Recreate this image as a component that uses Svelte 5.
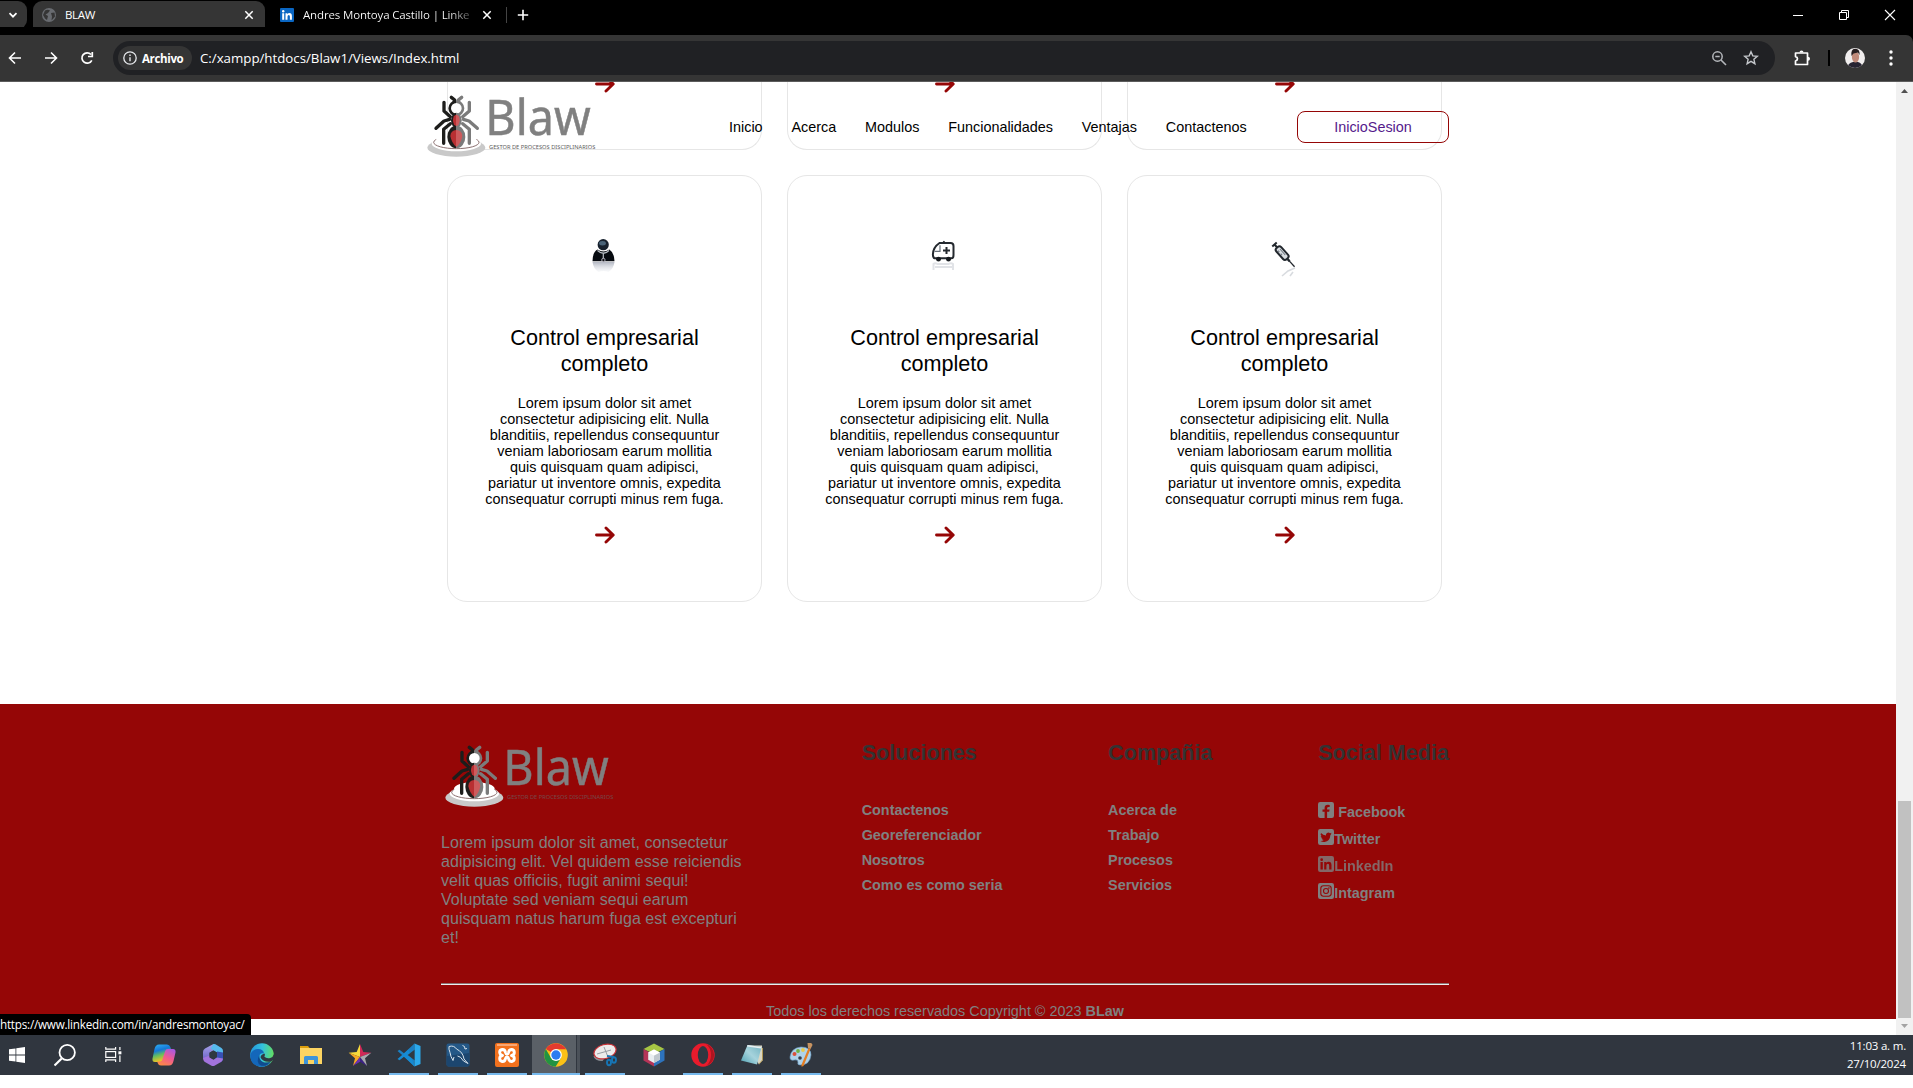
<script>
  const cards = [
    { icon: 'lawyer' },
    { icon: 'ambulance' },
    { icon: 'syringe' }
  ];
  const body = [
    'Lorem ipsum dolor sit amet',
    'consectetur adipisicing elit. Nulla',
    'blanditiis, repellendus consequuntur',
    'veniam laboriosam earum mollitia',
    'quis quisquam quam adipisci,',
    'pariatur ut inventore omnis, expedita',
    'consequatur corrupti minus rem fuga.'
  ];
  const about = [
    'Lorem ipsum dolor sit amet, consectetur',
    'adipisicing elit. Vel quidem esse reiciendis',
    'velit quas officiis, fugit animi sequi!',
    'Voluptate sed veniam sequi earum',
    'quisquam natus harum fuga est excepturi',
    'et!'
  ];
  const nav = ['Inicio', 'Acerca', 'Modulos', 'Funcionalidades', 'Ventajas', 'Contactenos'];
  const solutions = ['Contactenos', 'Georeferenciador', 'Nosotros', 'Como es como seria'];
  const company = ['Acerca de', 'Trabajo', 'Procesos', 'Servicios'];
  const social = [
    { name: 'Facebook', icon: 'facebook' },
    { name: 'Twitter', icon: 'twitter' },
    { name: 'LinkedIn', icon: 'linkedin' },
    { name: 'Intagram', icon: 'instagram' }
  ];
  const apps = [
    { id: 'search' }, { id: 'taskview' }, { id: 'copilot' }, { id: 'm365' }, { id: 'edge' },
    { id: 'explorer' }, { id: 'star' }, { id: 'vscode', open: true }, { id: 'workbench', open: true },
    { id: 'xampp', open: true }, { id: 'chrome', open: true, active: true }, { id: 'snip', open: true },
    { id: 'netbeans' }, { id: 'opera', open: true }, { id: 'notepad', open: true }, { id: 'paint', open: true }
  ];
</script>

{#snippet arrow()}
  <svg class="arrow" viewBox="0 0 20 18" width="20" height="18">
    <path d="M1.5 9H18M11 2l7.200 7-7.200 7" fill="none" stroke="#950606" stroke-width="2.900" stroke-linecap="round" stroke-linejoin="round" />
  </svg>
{/snippet}

{#snippet logo(dark)}
  <svg class="logo" viewBox="50 70 510 201" width="170" height="67">
    <ellipse cx="138" cy="234" rx="87" ry="27" fill="#c9c9c9" />
    <ellipse cx="138" cy="222" rx="74" ry="23" fill="#fff" />
    <ellipse cx="138" cy="218" rx="68" ry="19" fill="none" stroke="#8a6f6f" stroke-width="3" />
    <ellipse cx="138" cy="207" rx="61" ry="20" fill="#fff" />
    <g fill="none" stroke-width="10" stroke-linecap="round" stroke-linejoin="round">
      <path stroke="#1d1d1b" d="M123 83l10 8-2 10M101 98v26l19 17M118 149l-17 5-24 22M120 162l-20 17v42" />
      <path stroke="#7b7b7b" d="M154 83l-10 8 2 10M177 98v26l-20 17M159 149l17 5 25 22M157 162l20 17v42" />
    </g>
    <circle cx="138" cy="116" r="20" fill="#fff" stroke="url(#half)" stroke-width="8" />
    <ellipse cx="138" cy="152" rx="16" ry="23" fill="url(#half)" />
    <ellipse cx="138" cy="202" rx="27" ry="34" fill="url(#half)" />
    <ellipse cx="138" cy="152" rx="10" ry="17" fill="url(#halfRed)" />
    <path d="M138 181q-17 1-18 18 4 21 18 33 15-12 18-33-1-17-18-18z" fill="url(#halfRed)" />
    <text x="225" y="195" textLength="316" lengthAdjust="spacingAndGlyphs" font-family="'Noto Sans', sans-serif" font-size="148" fill="#808080" stroke="#808080" stroke-width="1.500">Blaw</text>
    <text x="236" y="238" textLength="319" lengthAdjust="spacingAndGlyphs" font-family="'Noto Sans', sans-serif" font-size="18" fill={dark ? '#75494a' : '#5d5d5d'}>GESTOR DE PROCESOS DISCIPLINARIOS</text>
  </svg>
{/snippet}

{#snippet cardIcon(name)}
  <svg class="pic" viewBox="0 0 40 44" width="40" height="44">
    {#if name === 'lawyer'}
      <circle cx="18.200" cy="10.700" r="5.600" fill="#17212d" />
      <ellipse cx="17.500" cy="9.200" rx="3.400" ry="2.200" fill="#4a6479" />
      <path d="M7.500 27.300q0-9 5-11.800 6 4 11.800 0 5 3 5.200 11.800z" fill="#060a10" />
      <path d="M12.500 16.500q6 5.500 11.500 0M18.300 19v6" fill="none" stroke="#b9bfc6" stroke-width="1.200" />
      <circle cx="18.400" cy="26" r="1.700" fill="#111" stroke="#ccd" stroke-width=".8" />
      <path d="M7.500 28h22q-1 7-6 10-5-2-10 0-5-3-6-10z" fill="url(#fadeA)" />
    {:else if name === 'ambulance'}
      <g fill="none" stroke="#24292f" stroke-width="2">
        <path d="M9.500 24.300q-1.600-.5-1.600-4 .2-7 6.600-11.300h11q3 0 3 3v9q0 3.300-2 3.300z" />
        <path d="M9.500 17.300h5.500v-6" stroke-width="1.200" stroke="#68717b" />
        <path d="M21.500 13v7M18 16.500h7" />
      </g>
      <path d="M17.500 8.500q1.400-3.500 2.800 0z" fill="#24292f" />
      <circle cx="13.500" cy="25.200" r="2.400" fill="#15191d" /><circle cx="23.500" cy="25.200" r="2.400" fill="#15191d" />
      <path d="M8.500 36v-6q1.500-1.500 4 0h11q2.500-1.500 4.500 0v6M10 33h18" stroke="#a8b0b9" stroke-width="2" opacity=".35" fill="none" />
    {:else}
      <g transform="translate(9.500 10.500) rotate(48)" fill="none" stroke="#22272d">
        <path d="M0-3v6M0 0h4" stroke-width="2" />
        <rect x="4" y="-3.200" width="15" height="6.500" rx="2.500" stroke-width="2" fill="#d9dde1" />
        <path d="M7-1h8M7 1.500h2m2 0h2" stroke-width="1" stroke="#6b747d" />
        <path d="M19.500 0h3" stroke-width="2.500" /><path d="M22 0h8" stroke-width="1.300" />
      </g>
      <path d="M30 34l-7 3-6 5m11-4l-3 4" stroke="#a8b0b9" stroke-width="1.600" opacity=".45" fill="none" />
    {/if}
  </svg>
{/snippet}

{#snippet socialIcon(name)}
  <svg class="sicon" viewBox="0 0 16 16" width="16" height="16">
    <rect width="16" height="16" rx="2.200" fill="#808080" />
    {#if name === 'facebook'}
      <path d="M6.600 16V9.800H4.500V7.500h2.100V6q0-3.300 3.300-3.300 1 0 1.800.2v2h-1.100q-1.500 0-1.500 1.400v1.200h2.500l-.4 2.300H9.100V16z" fill="#950606" />
    {:else if name === 'twitter'}
      <path d="M13.700 4.600l-1.300.4q.8-.5 1-1.200l-1.400.5q-1.300-1.300-2.900-.4-1.500.9-1.100 2.600Q5 6.300 3 4q-1.100 2 .7 3.300l-1-.3q.1 1.800 1.900 2.300l-1.100.1q.6 1.400 2.200 1.600-1.400 1.200-3.300 1 2 1.200 4.100 1 5.500-.7 5.900-7z" fill="#950606" />
    {:else if name === 'linkedin'}
      <path d="M2.500 6h2.300v7.500H2.500zM6.200 6h2.200v1q.8-1.200 2.300-1.200 2.800 0 2.800 3.400v4.300h-2.300V9.700q0-1.900-1.300-1.900-1.500 0-1.500 2v3.700H6.200z" fill="#950606" /><circle cx="3.650" cy="3.700" r="1.350" fill="#950606" />
    {:else}
      <g fill="none" stroke="#950606" stroke-width="1.100"><rect x="2.800" y="2.800" width="10.400" height="10.400" rx="2.600" /><circle cx="8" cy="8" r="2.500" /></g><circle cx="10.900" cy="5.100" r=".8" fill="#950606" />
    {/if}
  </svg>
{/snippet}

{#snippet appIcon(id)}
  <svg viewBox="0 0 24 24" width="24" height="24">
    {#if id === 'search'}
      <circle cx="13.200" cy="9.500" r="7.700" fill="none" stroke="#fff" stroke-width="1.800" /><path d="M7.700 15.500L.5 22.500" stroke="#fff" stroke-width="2.200" />
    {:else if id === 'taskview'}
      <g transform="translate(-.8 0)"><g fill="none" stroke="#fff" stroke-width="1.200"><path d="M3.600 4v2.200h9.800V4M3.600 19v-2.200h9.800V19" /><rect x="3.600" y="8.600" width="9.800" height="5.800" /><path d="M17.700 4v3M17.700 12.500V19" /></g><rect x="16.200" y="8.300" width="3" height="3" fill="#fff" /></g>
    {:else if id === 'copilot'}
      <path d="M7 1.500h8q2.500 0 3.300 2.500l.8 2.500h-3q-1.600 0-2.200 2l-2.800 8.500q-.6 2-2.500 2H3q-3 0-2.500-3.500l2-9.500Q3.500 1.500 7 1.500z" fill="url(#cpA)" />
      <path d="M17 22.500H9q-2.500 0-3.300-2.500l-.5-1.500h3q1.600 0 2.200-2L13.200 8q.6-2 2.500-2H21q3 0 2.500 3.500l-2 8.500q-1 4.500-4.500 4.500z" fill="url(#cpB)" />
    {:else if id === 'm365'}
      <path d="M12.500 1L4 5.500Q2 6.500 2 9v7l6.500-2.500V9.800L16 5.500z" fill="url(#mA)" />
      <path d="M12.500 1q1-.2 2 .3L20.500 5q1.500 1 1.500 3v9l-6-3.500V9.500L9.500 5.500z" fill="#56b9ec" />
      <path d="M22 9.500V16q0 1.700-1.600 2.700l-1.400.8-5-4 2-1.500V8.500z" fill="#3750b4" />
      <path d="M22 15.500q0 2-1.600 3.200l-6.900 4q-1.500.8-3 0l-7-4Q2 17.500 2 15l6.500-2.500v2l4 2.200L16 14.500z" fill="#a273dc" />
      <path d="M12.200 7.600L16 9.800v4.300l-3.800 2.200-3.700-2.200V9.800z" fill="#303842" />
    {:else if id === 'edge'}
      <circle cx="12" cy="12" r="11.800" fill="url(#edA)" />
      <path d="M.3 12Q2 6 8 6q5.500 0 6 4.500-4-1-5 3-.5 5 5 7 4 1 7-1.500-3.500 5-10 4.800Q.4 23 .3 12z" fill="#1467ba" />
      <path d="M9.500 12q-1 4.500 3.500 7 4 1.500 8-1-4 6-10 4.500-6-3-1.500-10.500z" fill="#104b8e" />
      <path d="M14.500 10.500q1 1.500-.2 3 2 2.500 6 1.500 3-1 3.500-4l.5 5-3 2.500q-8 1-10.500-3.500-1-3 3.700-4.500z" fill="#303842" />
    {:else if id === 'explorer'}
      <path d="M1 3h8l2 2.500H1z" fill="#dc9e0c" /><rect x="1" y="5" width="22" height="16" fill="#fcd462" /><path d="M5 21v-6.500q0-1.500 1.500-1.500h11q1.500 0 1.500 1.500V21h-4v-4H9v4z" fill="#3e94d8" />
    {:else if id === 'star'}
      <path d="M12 1L8.700 9 .7 9.700 12 14z" fill="#f6d93c" /><path d="M12 1l3.300 8 8 .7L12 14z" fill="#cf2957" /><path d="M.7 9.700L7 15.200 5 23l7-9z" fill="#f7a825" /><path d="M12 14l-7 9 7-4.200z" fill="#6a2fb4" /><path d="M12 14v4.800l7 4.200z" fill="#3c2187" /><path d="M23.300 9.700L12 14l7 9-2-7.800z" fill="#a9a9ae" />
    {:else if id === 'vscode'}
      <path d="M17.500.5L7 10.300 2.500 6.800.5 8l11 9.500 6 6z" fill="#1b80c4" /><path d="M17.500 23.500L7 13.700l-4.500 3.500-2-1.200 11-9.500z" fill="#168bd3" /><path d="M17.500.5L23.500 3v18l-6 2.500z" fill="#2ba9ec" /><path d="M17.500 6.800v10.400L10.700 12z" fill="#303842" />
    {:else if id === 'workbench'}
      <rect x=".5" y=".5" width="23" height="23" rx="2" fill="#245887" /><path d="M.5 13L23.500 10v11.500q0 2-2 2h-19q-2 0-2-2z" fill="#1c466f" /><path d="M3 3.500q5-1.500 7.500 2.500 6.500 3 7.500 10l4 4.500-4.500-2.500q-3-5-6-5M8 14l-1 3.500q-2.500-4-3-8Q2.500 6 3 3.500M16.500 2.500l2 1 .5 2.500 2-.5" fill="none" stroke="#d7e2eb" stroke-width="1" />
    {:else if id === 'xampp'}
      <rect width="24" height="24" rx="2" fill="#f2711d" /><rect x="2" y="1" width="20" height="2" fill="#f9a672" />
      <path d="M10.500 9.500Q10 6.300 7.200 6.500 4.500 7 4.700 9.500T7.500 12.500Q4.700 13 4.700 15.500t2.500 3q2.800.2 3.300-3 .3-1.500 1.500-1.500t1.500 1.500q.5 3.200 3.300 3 2.500-.5 2.500-3t-2.800-3q2.800-.5 2.800-3t-2.500-3q-2.800-.2-3.300 3-.3 1.500-1.500 1.500t-1.500-1.500z" fill="none" stroke="#fff" stroke-width="2.900" stroke-linejoin="round" />
    {:else if id === 'chrome'}
      <circle cx="12" cy="12" r="11.800" fill="#fbc116" /><path d="M12 12L1.800 6.100A11.800 11.800 0 0 1 22.200 6.200H12z" fill="#e33b2e" /><path d="M1.800 6.100A11.800 11.800 0 0 0 11.500 23.800L17 15l-5-3-5 3z" fill="#229342" /><circle cx="12" cy="12" r="5.900" fill="#fff" /><circle cx="12" cy="12" r="4.700" fill="#2d7cf0" />
    {:else if id === 'snip'}
      <path d="M.5 13q1 5 9 5l3-4z" fill="#8e9297" /><ellipse cx="12" cy="8.500" rx="11.300" ry="7" transform="rotate(-16 12 8.500)" fill="#ecebeb" stroke="#c93238" stroke-width="1.200" /><path d="M11 4l4 10M4 11l14-4" stroke="#989da3" /><g fill="none" stroke="#1675b5" stroke-width="1.900"><path d="M14 13l7 1" /><ellipse cx="16" cy="19.500" rx="2" ry="2.700" /><ellipse cx="21" cy="17" rx="2" ry="2.700" /></g>
    {:else if id === 'netbeans'}
      <path d="M12 .5L22.500 6 12 11 1.500 6z" fill="#a7c644" /><path d="M1.500 6L12 12v11.500L1.500 17.500z" fill="#b43457" /><path d="M22.500 6L12 12v11.500l10.500-6z" fill="#2d73bd" /><path d="M12 6.500l5.800 3v7.200L12 20l-5.800-3.300V9.500z" fill="#e9eef1" /><path d="M12 12.500l5.800-3v7.200L12 20z" fill="#bfc7ce" /><path d="M6.200 9.500l5.800-3 5.800 3-5.800 3z" fill="#fff" />
    {:else if id === 'opera'}
      <circle cx="12" cy="12" r="11.700" fill="#e91b2c" /><path d="M15 1a11.500 11.500 0 0 1 0 22q5-4 5-11T15 1z" fill="#ad1520" /><ellipse cx="12" cy="12" rx="5.200" ry="9" fill="#303842" />
    {:else if id === 'notepad'}
      <path d="M8 2.500h14l.5 15-3.500 4z" fill="#d9d6c3" /><path d="M7.500 2L21.500 4 17 21.500 1 17.500z" fill="url(#npA)" /><path d="M7.500 2L21.500 4l-.6 1.500L7 3.500z" fill="#e7eef0" /><path d="M22.500 5v12L19 21" fill="none" stroke="#b09754" />
    {:else}
      <path d="M1 14Q2 5 12 4q10 0 10 8-1 10-11 10-3 0-2-3 0-3-4-2-4 1-4-3z" fill="#aed2e9" stroke="#6ba0c7" stroke-width=".6" /><circle cx="5.500" cy="11" r="2" fill="#d9503b" /><circle cx="9" cy="8" r="1.900" fill="#6fb244" /><circle cx="14" cy="7" r="1.900" fill="#e9ca4b" /><circle cx="11" cy="15" r="1.800" fill="#343e4a" /><path d="M19.500 5l2 1L14.500 23l-2 .7v-2z" fill="#e37d23" /><path d="M18.500 0q4.500-1 5 2l-2 4-2.500-1z" fill="#c69361" />
    {/if}
  </svg>
{/snippet}

<div class="screen">
  <svg class="defs" width="0" height="0">
    <defs>
      <linearGradient id="half"><stop offset=".5" stop-color="#1d1d1b" /><stop offset=".5" stop-color="#7b7b7b" /></linearGradient>
      <linearGradient id="halfRed"><stop offset=".5" stop-color="#b92f32" /><stop offset=".5" stop-color="#cd5a5c" /></linearGradient>
      <linearGradient id="mA" x1="0" y1="0" x2="0" y2="1"><stop offset="0" stop-color="#a9a4ea" /><stop offset="1" stop-color="#7068c9" /></linearGradient>
      <linearGradient id="cpA" x1="0" y1="0" x2=".3" y2="1"><stop offset="0" stop-color="#2fb5f5" /><stop offset=".4" stop-color="#1677d8" /><stop offset=".65" stop-color="#62bd62" /><stop offset="1" stop-color="#f3c521" /></linearGradient>
      <linearGradient id="cpB" x1=".8" y1="0" x2=".3" y2="1"><stop offset="0" stop-color="#a759e2" /><stop offset=".5" stop-color="#ef5a92" /><stop offset="1" stop-color="#fc8846" /></linearGradient>
      <linearGradient id="edA" x1="0" y1=".3" x2="1" y2=".4"><stop offset="0" stop-color="#2395dc" /><stop offset=".5" stop-color="#33c1dd" /><stop offset="1" stop-color="#63de60" /></linearGradient>
      <linearGradient id="npA" x1="0" y1="1" x2="1" y2="0"><stop offset="0" stop-color="#4ea1b3" /><stop offset=".5" stop-color="#a6d3dc" /><stop offset="1" stop-color="#71b2c0" /></linearGradient>
      <linearGradient id="fadeA" x1="0" y1="0" x2="0" y2="1"><stop offset="0" stop-color="#9a9fae" stop-opacity=".75" /><stop offset="1" stop-color="#dfe3ea" stop-opacity=".2" /></linearGradient>
    </defs>
  </svg>

  <div class="tabs">
    <div class="drop"><svg viewBox="0 0 10 10" width="10" height="10"><path d="M1.500 3.200L5 6.700l3.500-3.500" fill="none" stroke="#fff" stroke-width="1.700" /></svg></div>
    <div class="tab">
      <svg viewBox="0 0 14 14" width="14" height="14"><circle cx="7" cy="7" r="7" fill="#686b70" /><path d="M3 2.500q3-1.500 5 0L6 5 3.500 6.500 6 8l-1 4-2-1.500L1 7zM9 5l3.500-.5.5 4-3.500 4 .5-4z" fill="#353535" /></svg>
      <span class="tabname">BLAW</span>
      <svg class="x" viewBox="0 0 10 10" width="10" height="10"><path d="M1.300 1.300l7.400 7.400m0-7.400L1.300 8.700" stroke="#fff" stroke-width="1.500" /></svg>
    </div>
    <div class="tab2">
      <svg viewBox="0 0 14 14" width="14" height="14"><rect width="14" height="14" rx="1" fill="#0a66c2" /><path d="M2.200 5.300h2v6.500h-2zM5.500 5.300h1.900v.9q.7-1.100 2-1.100 2.500 0 2.500 3v3.700h-2V8.500q0-1.600-1.100-1.600-1.300 0-1.300 1.800v3.100h-2z" fill="#fff" /><circle cx="3.200" cy="3.200" r="1.200" fill="#fff" /></svg>
      <span class="title2">Andres Montoya Castillo | Linke</span>
      <svg class="x" viewBox="0 0 10 10" width="10" height="10"><path d="M1.300 1.300l7.400 7.400m0-7.400L1.300 8.700" stroke="#fff" stroke-width="1.500" /></svg>
    </div>
    <i class="sep"></i>
    <svg class="plus" viewBox="0 0 12 12" width="12" height="12"><path d="M6 .8v10.400M.8 6h10.400" stroke="#fff" stroke-width="1.600" /></svg>
    <div class="win">
      <svg viewBox="0 0 12 12" width="12" height="12"><path d="M1 6.500h10" stroke="#fff" /></svg>
      <svg viewBox="0 0 12 12" width="12" height="12"><path d="M1.500 3.500h7v7h-7zM3.500 3V1.500h7v7H9" fill="none" stroke="#fff" /></svg>
      <svg viewBox="0 0 12 12" width="12" height="12"><path d="M1 1l10 10M11 1L1 11" stroke="#fff" stroke-width="1.100" /></svg>
    </div>
  </div>

  <div class="toolbar">
    <svg viewBox="0 0 14 14" width="14" height="14"><path d="M13 7H1.800M7 1.500L1.500 7 7 12.500" fill="none" stroke="#fff" stroke-width="1.600" /></svg>
    <svg viewBox="0 0 14 14" width="14" height="14"><path d="M1 7h11.200M7 1.500L12.500 7 7 12.500" fill="none" stroke="#fff" stroke-width="1.600" /></svg>
    <svg viewBox="0 0 14 14" width="14" height="14"><path d="M11.800 9.300A5.200 5.200 0 1 1 11 3.500M12.300 1v4.500H8" fill="none" stroke="#fff" stroke-width="1.700" /></svg>
    <div class="omni">
      <div class="chip">
        <svg viewBox="0 0 14 14" width="14" height="14"><circle cx="7" cy="7" r="6.200" fill="none" stroke="#e8eaed" stroke-width="1.300" /><path d="M7 6.200v4M7 3.500v1.400" stroke="#e8eaed" stroke-width="1.400" /></svg>
        <span>Archivo</span>
      </div>
      <span class="url">C:/xampp/htdocs/Blaw1/Views/Index.html</span>
      <svg class="mag" viewBox="0 0 16 16" width="16" height="16"><circle cx="6.500" cy="6.500" r="4.700" fill="none" stroke="#b4b7bb" stroke-width="1.500" /><path d="M10 10l5 5M4.300 6.500h4.400" stroke="#b4b7bb" stroke-width="1.600" /></svg>
      <svg viewBox="0 0 16 16" width="16" height="16"><path d="M8 1.800l1.800 4.100 4.500.4-3.400 3 1 4.400L8 11.400l-3.900 2.300 1-4.400-3.400-3 4.500-.4z" fill="none" stroke="#c4c7cb" stroke-width="1.400" /></svg>
    </div>
    <svg class="puzzle" viewBox="0 0 18 18" width="18" height="18"><path d="M2.500 4h12v11.500h-12V12q2-.5 2-2.200t-2-2.200z" fill="none" stroke="#fff" stroke-width="1.700" stroke-linejoin="round" /><path d="M6.500 3.500a2 2 0 0 1 4 0zM15 7.800a2 2 0 0 1 0 4z" fill="#fff" /></svg>
    <i class="bar"></i>
    <svg class="avatar" viewBox="0 0 20 20" width="20" height="20"><clipPath id="av"><circle cx="10" cy="10" r="10" /></clipPath><g clip-path="url(#av)"><rect width="20" height="20" fill="#f1eeee" /><path d="M2 20q1-5 6-6l5 0q4 1 5 6z" fill="#272433" /><ellipse cx="10.500" cy="9" rx="3.600" ry="5.500" fill="#c08a7a" /><path d="M6.500 8Q5.500 1 10 .8q5-.2 4.600 6.200L13 4.500l-4.500 1z" fill="#261e20" /></g></svg>
    <svg class="dots" viewBox="0 0 4 16" width="4" height="16"><circle cx="2" cy="2" r="1.700" fill="#fff" /><circle cx="2" cy="8" r="1.700" fill="#fff" /><circle cx="2" cy="14" r="1.700" fill="#fff" /></svg>
  </div>

  <div class="view">
    <main>
      <div class="row cut">
        {#each cards as c (c.icon)}<article>{@render arrow()}</article>{/each}
      </div>
      <div class="row">
        {#each cards as c (c.icon)}
          <article class="full">
            {@render cardIcon(c.icon)}
            <h3>Control empresarial<br />completo</h3>
            <p>{#each body as l}{l}<br />{/each}</p>
            {@render arrow()}
          </article>
        {/each}
      </div>
      <footer>
        <div class="cols">
          <div class="about">
            {@render logo(true)}
            <p>{#each about as l}{l}<br />{/each}</p>
          </div>
          <div class="col">
            <h4>Soluciones</h4>
            {#each solutions as s}<span class="lnk">{s}</span>{/each}
          </div>
          <div class="col">
            <h4>Compañia</h4>
            {#each company as s}<span class="lnk">{s}</span>{/each}
          </div>
          <div class="col last">
            <h4>Social Media</h4>
            {#each social as s}
              <div class="soc" class:spaced={s.icon === 'facebook'} class:hover={s.icon === 'linkedin'}>{@render socialIcon(s.icon)}<span>{s.name}</span></div>
            {/each}
          </div>
        </div>
        <div class="rule"></div>
        <div class="copy">Todos los derechos reservados Copyright © 2023 <b>BLaw</b></div>
      </footer>
      <header>
        {@render logo(false)}
        <nav>
          {#each nav as n}<span>{n}</span>{/each}
        </nav>
        <div class="login">InicioSesion</div>
      </header>
      <div class="status">https://www.linkedin.com/in/andresmontoyac/</div>
    </main>
    <div class="scroll">
      <svg viewBox="0 0 7 4" width="7" height="4"><path d="M0 4L3.500 0 7 4z" fill="#505050" /></svg>
      <div class="thumb"></div>
      <svg viewBox="0 0 7 4" width="7" height="4"><path d="M0 0l3.500 4L7 0z" fill="#a3a3a3" /></svg>
    </div>
  </div>

  <div class="taskbar">
    <div class="start"><svg viewBox="0 0 16 16" width="16" height="16"><path d="M0 2.300L6.500 1.400v6.200H0zM7.300 1.300L16 0v7.600H7.300zM0 8.400h6.500v6.200L0 13.700zM7.300 8.400H16V16l-8.700-1.300z" fill="#fff" /></svg></div>
    {#each apps as a (a.id)}
      <div class="app" class:open={a.open} class:active={a.active}>{@render appIcon(a.id)}</div>
    {/each}
    <div class="clock"><span>11:03 a. m.</span><span>27/10/2024</span></div>
  </div>
</div>

<style>
  :global(body) { margin: 0; background: #fff; }
  .screen { width: 1913px; height: 1088px; overflow: hidden; display: flex; flex-direction: column; font-family: 'Liberation Sans', Arial, sans-serif; background: #fff; }
  .defs { position: absolute; }
  svg { display: block; flex: none; }
  .logo { overflow: visible; }
  .tabs { height: 35px; flex: none; background: #000; display: flex; align-items: flex-start; font: 11.500px/30px 'Open Sans', sans-serif; color: #fff; }
  .drop { width: 27px; height: 28px; margin: 1px 6px 0 0; border-radius: 0 9px 9px 0; background: #353535; display: flex; align-items: center; justify-content: center; padding-right: 2px; box-sizing: border-box; }
  .tab { width: 232px; height: 34px; margin-top: 1px; background: #353535; border-radius: 9px 9px 0 0; display: flex; align-items: center; padding: 0 11px 6px 9px; box-sizing: border-box; }
  .tabname { margin-left: 9px; letter-spacing: -0.35px; line-height: 16px; }
  .x { margin-left: auto; }
  .tab2 { width: 212px; height: 30px; margin-left: 15px; display: flex; align-items: center; }
  .title2 { width: 168px; margin-left: 9px; overflow: hidden; white-space: nowrap; letter-spacing: -0.15px; background: linear-gradient(90deg, #fff 86%, #444); -webkit-background-clip: text; background-clip: text; color: transparent; }
  .sep { width: 1px; height: 16px; margin: 7px 0 0 14px; background: #444; }
  .plus { margin: 9px 0 0 10px; }
  .win { margin: 9px 17px 0 auto; display: flex; gap: 34px; }
  .toolbar { height: 46px; flex: none; background: #353535; border-bottom: 1px solid #5c5c5c; border-radius: 0 7px 0 0; display: flex; align-items: center; padding-left: 8px; gap: 22px; box-shadow: 0 -8px 0 #000; clip-path: none; }
  .omni { width: 1662px; height: 34px; margin-left: -3px; border-radius: 17px; background: #202124; display: flex; align-items: center; box-sizing: border-box; padding: 0 16px 0 5px; font-family: 'Open Sans', sans-serif; color: #fff; }
  .chip { width: 74px; height: 24px; border-radius: 12px; background: #353535; display: flex; align-items: center; gap: 5px; padding-left: 5px; box-sizing: border-box; font-size: 11.500px; font-weight: 700; letter-spacing: -0.35px; }
  .url { margin-left: 8px; font-size: 13.300px; letter-spacing: -0.02px; white-space: nowrap; }
  .mag { margin: 0 16px 0 auto; }
  .puzzle { margin-left: -4px; }
  .bar { width: 2px; height: 16px; background: #000; margin-left: -5px; }
  .avatar { margin-left: -7px; }
  .dots { margin-left: 2px; }
  .view { height: 953px; flex: none; display: flex; }
  main { position: relative; width: 1896px; display: flex; flex-direction: column; }
  .row { display: grid; grid-template-columns: repeat(3, 315px); gap: 25px; padding-left: 447px; height: 427px; margin-bottom: 102px; flex: none; }
  .row.cut { height: 68px; overflow: hidden; margin-bottom: 25px; }
  article { border: 1px solid #e6e6e6; border-radius: 20px; box-sizing: border-box; display: flex; flex-direction: column; align-items: center; text-align: center; color: #000; }
  .cut article { border-top: 0; border-radius: 0 0 20px 20px; }
  .cut .arrow { margin-top: -7px; }
  .full { padding-top: 58px; }
  h3 { margin: 47px 0 18px; font-size: 21.600px; font-weight: 400; line-height: 26px; }
  article p { margin: 0 0 19px; font-size: 14.400px; line-height: 16px; white-space: nowrap; }
  header { position: absolute; left: 427px; top: 11px; width: 1022px; height: 67px; display: flex; align-items: center; font-size: 14.400px; }
  nav { display: flex; gap: 28.800px; margin-left: 132px; }
  .login { margin-left: auto; width: 152px; height: 32px; box-sizing: border-box; border: 1px solid #950606; border-radius: 8px; color: #551a8b; line-height: 30px; text-align: center; }
  footer { height: 315px; flex: none; background: #950606; color: #808080; box-sizing: border-box; padding: 0 447px 0 441px; overflow: hidden; }
  .cols { display: flex; justify-content: space-between; height: 279px; }
  .about { width: 315px; }
  .about .logo { margin: 39px 0 0 4px; }
  .about p { margin: 23px 0 0; font-size: 16px; line-height: 19px; letter-spacing: 0.06px; white-space: nowrap; }
  .col { display: flex; flex-direction: column; align-items: flex-start; padding-top: 36px; }
  h4 { margin: 0 0 36px; font-size: 21.600px; line-height: 26px; color: #333; }
  .last h4 { margin-bottom: 35px; }
  .lnk { font-size: 14.400px; font-weight: 700; line-height: 17px; margin-bottom: 8px; white-space: nowrap; }
  .soc { display: flex; align-items: flex-start; height: 19px; margin-bottom: 8px; font-size: 14.400px; font-weight: 700; line-height: 17px; }
  .sicon { margin-top: 1px; }
  .soc span { padding-top: 3px; }
  .spaced span { margin-left: 4px; }
  .hover { opacity: .8; }
  .rule { height: 1px; background: #8c7474; border-bottom: 1px solid #eee; }
  .copy { margin-top: 18px; font-size: 14.400px; line-height: 17px; text-align: center; white-space: nowrap; }
  .status { position: absolute; left: 0; bottom: 0; width: 251px; height: 21px; background: #000; border-radius: 0 4px 0 0; color: #fff; font: 11.700px/21px 'Open Sans', sans-serif; letter-spacing: -0.23px; white-space: nowrap; }
  .scroll { width: 17px; background: #f1f1f1; display: flex; flex-direction: column; align-items: center; justify-content: space-between; padding: 7px 0; box-sizing: border-box; }
  .thumb { width: 13px; height: 217px; background: #c1c1c1; margin: auto 0 6px; }
  .taskbar { height: 40px; flex: none; background: #30363f; display: flex; }
  .start { width: 41px; display: flex; align-items: center; padding-left: 9px; box-sizing: border-box; }
  .app { width: 49px; height: 40px; display: flex; align-items: center; justify-content: center; position: relative; }
  .open::after { content: ''; position: absolute; left: 5px; bottom: 0; width: 40px; height: 2px; background: #76b9ed; }
  .active { background: linear-gradient(90deg, transparent 1px, #5a6067 1px 45px, #30363f 45px 46px, #4b5159 46px); }
  .active::after { left: 1px; width: 48px; }
  .clock { margin-left: auto; padding: 2px 7px 0 0; display: flex; flex-direction: column; align-items: flex-end; font: 11.500px/18px 'Open Sans', sans-serif; color: #fff; letter-spacing: -0.2px; }
</style>
